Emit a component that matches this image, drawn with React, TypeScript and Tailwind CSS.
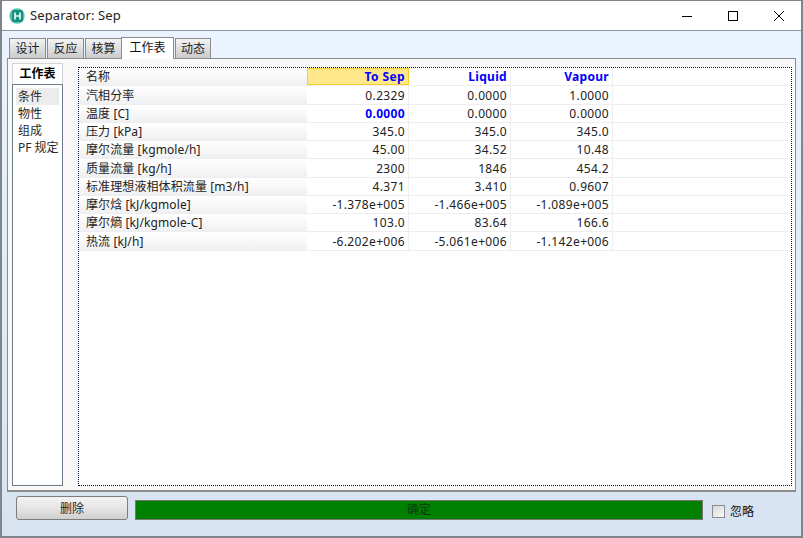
const rows: { label: string; vals: string[]; h: string; bold?: boolean; pt?: string }[] = [
  { label: "汽相分率", vals: ["0.2329", "0.0000", "1.0000"], h: "h-[19px]", pt: "pt-px" },
  { label: "温度 [C]", vals: ["0.0000", "0.0000", "0.0000"], h: "h-[18px]", bold: true },
  { label: "压力 [kPa]", vals: ["345.0", "345.0", "345.0"], h: "h-[18px]" },
  { label: "摩尔流量 [kgmole/h]", vals: ["45.00", "34.52", "10.48"], h: "h-[18px]" },
  { label: "质量流量 [kg/h]", vals: ["2300", "1846", "454.2"], h: "h-[19px]", pt: "pt-px" },
  { label: "标准理想液相体积流量 [m3/h]", vals: ["4.371", "3.410", "0.9607"], h: "h-[18px]" },
  { label: "摩尔焓 [kJ/kgmole]", vals: ["-1.378e+005", "-1.466e+005", "-1.089e+005"], h: "h-[18px]" },
  { label: "摩尔熵 [kJ/kgmole-C]", vals: ["103.0", "83.64", "166.6"], h: "h-[18px]" },
  { label: "热流 [kJ/h]", vals: ["-6.202e+006", "-5.061e+006", "-1.142e+006"], h: "h-[19px]", pt: "pt-px" },
];

function Tab({ label, w }: { label: string; w: string }) {
  return (
    <div className={`${w} h-[20px] mr-px pt-px flex items-center justify-center border border-b-0 border-[#8c8c8c] bg-gradient-to-b from-[#f4f4f4] to-[#cbcbcb] text-[#222]`}>
      {label}
    </div>
  );
}

export default function App() {
  return (
    <div
      className="w-[803px] h-[538px] overflow-hidden bg-white flex flex-col border-t border-l-2 border-r-2 border-b-2 border-[#7f858b] text-[12px] leading-none text-[#1a1a1a]"
      style={{ fontFamily: '"Noto Sans", "Noto Sans CJK SC", sans-serif' }}
    >
      <div className="h-[30px] shrink-0 flex items-center bg-white pl-[7px] border-b border-[#8c9299]">
        <svg width="16" height="16" viewBox="0 0 16 16">
          <circle cx="8" cy="8" r="7.7" fill="#4fc4b0" />
          <rect x="3" y="2" width="11" height="12" rx="2" fill="#16907c" />
          <path d="M6 4.5v7M11 4.5v7M6 8h5" stroke="#f2fbf9" strokeWidth="1.6" fill="none" />
        </svg>
        <span className="ml-[5px] text-[13px] text-[#222] tracking-[0.1px]">Separator: Sep</span>
        <div className="ml-auto flex items-center -mr-[1px]">
          <svg width="46" height="20" viewBox="0 0 46 20">
            <path d="M18 10.5h10" stroke="#000" strokeWidth="1" />
          </svg>
          <svg width="46" height="20" viewBox="0 0 46 20">
            <rect x="18.5" y="5.5" width="9" height="9" fill="none" stroke="#000" strokeWidth="1" />
          </svg>
          <svg width="46" height="20" viewBox="0 0 46 20">
            <path d="M18 5l10 10M28 5L18 15" stroke="#000" strokeWidth="1" />
          </svg>
        </div>
      </div>

      <div className="flex-1 min-h-0 flex flex-col bg-gradient-to-b from-[#ebf4fe] to-[#d7e3f1] px-[5px] pt-[5px]">
        <div className="h-[22px] shrink-0 flex items-end pl-[2px] relative z-10">
          <Tab label="设计" w="w-[37px]" />
          <Tab label="反应" w="w-[37px]" />
          <Tab label="核算" w="w-[37px]" />
          <div className="w-[53px] h-[22px] mr-px -ml-[2px] flex items-center justify-center border border-b-0 border-[#8c8c8c] bg-white -mb-px pb-px text-[#111]">
            工作表
          </div>
          <Tab label="动态" w="w-[36px]" />
        </div>

        <div className="w-[789px] h-[434px] shrink-0 border border-[#8c8c8c] border-b-2 bg-[#f8f8f8] flex pl-[4px] pr-[3px] pt-[4px]">
          <div className="w-[51px] h-[423px] shrink-0 flex flex-col">
            <div className="h-[21px] shrink-0 flex items-center justify-center bg-white border border-b-0 border-[#d0d5da] font-bold text-black">
              工作表
            </div>
            <div className="flex-1 border border-[#6d7b88] bg-white px-[3px] pt-[3px] flex flex-col text-[#2a2a2a]">
              <div className="h-[17px] pl-[2px] flex items-center bg-[#ececec]">条件</div>
              <div className="h-[17px] pl-[2px] flex items-center">物性</div>
              <div className="h-[17px] pl-[2px] flex items-center">组成</div>
              <div className="h-[17px] pl-[2px] flex items-center whitespace-nowrap">PF 规定</div>
            </div>
          </div>

          <div className="ml-[15px] mt-[4px] w-[714px] h-[419px] shrink-0 border border-dotted border-[#061a38] bg-white flex flex-col">
            <div className="h-[18px] shrink-0 flex border-b border-[#eeeeee] font-bold text-[#0000ff]">
              <div className="w-[228px] pl-[7px] flex items-center bg-gradient-to-b from-white via-[#f8f8f9] to-[#eff0f2] font-normal text-[#222]">名称</div>
              <div className="w-[102px] pr-[3px] flex items-center justify-end bg-[#ffe88c] border border-[#f5cf2a] tracking-[0.4px]">To Sep</div>
              <div className="w-[102px] pr-[3px] flex items-center justify-end border-r border-[#eeeeee] tracking-[0.3px]">Liquid</div>
              <div className="w-[102px] pr-[3px] flex items-center justify-end border-r border-[#eeeeee] tracking-[0.3px]">Vapour</div>
            </div>
            {rows.map((r) => (
              <div key={r.label} className={`${r.h} shrink-0 flex border-b border-[#eeeeee]`}>
                <div className={`w-[228px] pl-[7px] flex items-center bg-gradient-to-b from-white via-[#f8f8f9] to-[#eff0f2] text-[#222] whitespace-nowrap tracking-[0.1px] ${r.pt ?? ""}`}>
                  {r.label}
                </div>
                {r.vals.map((v, i) => (
                  <div
                    key={i}
                    className={`w-[102px] pr-[3px] flex items-center justify-end border-r border-[#eeeeee] tracking-[0.35px] ${r.pt ?? ""} ${r.bold && i === 0 ? "font-bold text-[#0000ff]" : "text-[#222]"}`}
                  >
                    {v}
                  </div>
                ))}
              </div>
            ))}
          </div>
        </div>

        <div className="flex-1 flex items-start pl-[9px] pt-[4px]">
          <button className="w-[112px] h-[24px] pt-[2px] rounded-[3px] border border-[#7d7d7d] bg-gradient-to-b from-[#f3f3f3] via-[#e6e6e6] to-[#cfcfcf] text-[#222] text-[12px]">
            删除
          </button>
          <div className="ml-[7px] mt-[4px] w-[568px] h-[20px] border border-[#777] bg-[#008000] flex items-center justify-center text-[#0c3a0c]">
            确定
          </div>
          <div className="ml-[9px] mt-[9px] w-[13px] h-[13px] border border-[#8d8d8d] bg-gradient-to-br from-[#d8d8d8] to-[#fafafa]" />
          <span className="ml-[5px] mt-[9px] h-[13px] flex items-center text-[#111]">忽略</span>
        </div>
      </div>
    </div>
  );
}
